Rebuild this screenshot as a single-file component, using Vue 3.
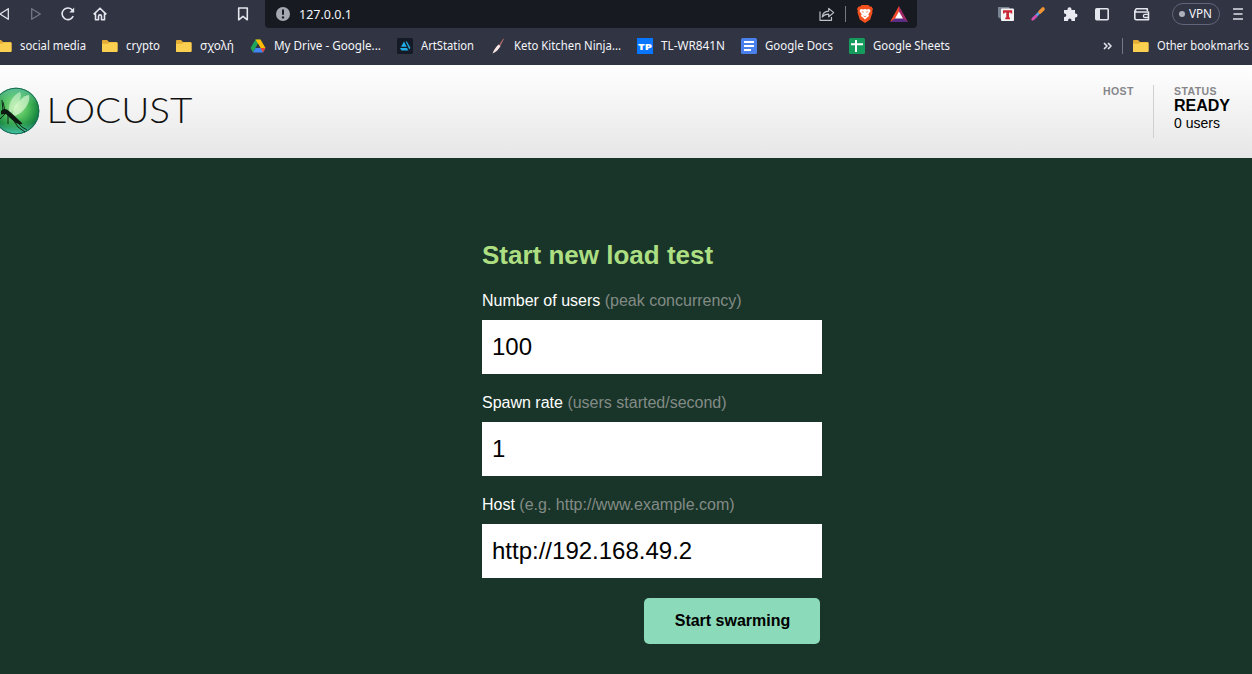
<script setup>
import { ref } from 'vue'

const bookmarks = [
  { icon: 'folder', label: 'social media', w: 66 },
  { icon: 'folder', label: 'crypto', w: 34 },
  { icon: 'folder', label: 'σχολή', w: 34 },
  { icon: 'drive', label: 'My Drive - Google...', w: 107 },
  { icon: 'art', label: 'ArtStation', w: 53 },
  { icon: 'knife', label: 'Keto Kitchen Ninja...', w: 107 },
  { icon: 'tp', label: 'TL-WR841N', w: 64 },
  { icon: 'docs', label: 'Google Docs', w: 68 },
  { icon: 'sheets', label: 'Google Sheets', w: 77 },
]

const fields = ref([
  { label: 'Number of users', hint: '(peak concurrency)', value: '100' },
  { label: 'Spawn rate', hint: '(users started/second)', value: '1' },
  { label: 'Host', hint: '(e.g. http://www.example.com)', value: 'http://192.168.49.2' },
])
</script>

<template>
  <div class="window">
    <div class="chrome">
      <div class="toolbar">
        <div class="nav">
          <svg class="ic" viewBox="0 0 16 16"><path d="M12.3 2.7v10.6L4 8z" class="line" /></svg>
          <svg class="ic dim" viewBox="0 0 16 16"><path d="M3.700 2.700v10.600L12.300 8z" class="line" /></svg>
          <svg class="ic" viewBox="0 0 16 16"><path d="M13.2 10.2A5.8 5.8 0 1 1 12.6 4.4" class="line thick" /><path d="M14.2 1.6v5H9.3z" fill="#e4e6ee" /></svg>
          <svg class="ic" viewBox="0 0 16 16"><path d="M1.7 8.4 8 2.2l6.3 6.2M3.5 7.5v6.2h3V10.400a1.500 1.500 0 0 1 3 0v3.300h3V7.500" class="line thick" /></svg>
        </div>
        <svg class="ic save" viewBox="0 0 16 16"><path d="M3.700 2h8.600v11.800L8 10.300l-4.300 3.500z" class="line thick" /></svg>
        <div class="urlbar">
          <svg class="ic" viewBox="0 0 16 16"><circle cx="8" cy="8" r="7" fill="#a5a7b1" /><path d="M8 3.600v5.200" stroke="#171a21" stroke-width="2" /><circle cx="8" cy="11.400" r="1.200" fill="#171a21" /></svg>
          <svg class="url" width="54" height="18"><text x="0" y="13.500" textLength="53" lengthAdjust="spacingAndGlyphs">127.0.0.1</text></svg>
          <svg class="ic share" viewBox="0 0 16 16"><path d="M1 5.500V14.300h11.500V11" class="soft" /><path d="M3.300 11C3.600 7.200 6 5.300 9.700 5.200V2.400l5 4.200-5 4.200V8.100C7 8 5 8.700 3.300 11z" class="soft" /></svg>
          <i class="bar"></i>
          <svg class="brave" viewBox="0 0 16 18">
            <path d="M4.600 0h6.800l1.300 1.500 1.700-.1L16 4l-.8 1.800.3 1.700-2.300 7L8 18l-5.200-3.500L.5 7.500l.3-1.700L0 4l1.600-2.600 1.700.1z" fill="#f4511f" />
            <path d="m3.700 4 2.500.5L8 4l1.800.5 2.500-.5 1.200 2-2.200 3.200.8 1.800-2 1.400L8 14.500l-2.100-2.100-2-1.400.8-1.800L2.500 6z" fill="#fff" />
            <path d="m4.500 6.300 2.300.5-.7 1zM11.500 6.300l-2.300.5.700 1zM6 10.500l2 .8 2-.8-1.200 1.300H7.200z" fill="#f4511f" />
          </svg>
          <svg class="bat" viewBox="0 0 18 16"><path d="M9 0 0 16l9-5z" fill="#f0492b" /><path d="m9 0 9 16-9-5z" fill="#a02a67" /><path d="M0 16h18l-9-6z" fill="#5b2d86" /><path d="m9 5.500 4 7H5z" fill="#fff" /></svg>
        </div>
        <div class="exts">
          <svg class="ic" viewBox="0 0 16 16"><path d="M0 1h11l2 4v9H4L0 11z" fill="#788491" /><rect x="3" y="2.500" width="13" height="12.500" rx="1" fill="#f4f4f5" /><path d="M5 4.300h9.200v3.200h-1.400l-.4-.9H11v4.900h1V13.200H7.300v-1.700h1V6.600H6.800l-.4.900H5z" fill="#ca2634" /></svg>
          <svg class="ic" viewBox="0 0 16 16"><path d="m3 13 6.300-6.400" stroke="#5a9fea" stroke-width="2.700" /><path d="m2.600 13.400 3.300-3.300" stroke="#d947a8" stroke-width="2.700" stroke-linecap="round" /><path d="m10 6 3-3" stroke="#f19432" stroke-width="3.600" stroke-linecap="round" /></svg>
          <svg class="ic" viewBox="0 0 16 16"><path d="M2 4h3.500v-.8a2 2 0 0 1 4 0V4H13v3.500h.5a2 2 0 0 1 0 4H13V15H9.500v-.8a1.700 1.700 0 0 0-3.400 0V15H2v-4h.6a1.700 1.700 0 0 0 0-3.400H2z" fill="#e9eaf1" /></svg>
          <svg class="ic" viewBox="0 0 16 16"><rect x="1.800" y="2.800" width="12.400" height="10.900" rx="1" class="line thick" /><path d="M2 3h4v10.500H2z" fill="#e4e6ee" /></svg>
        </div>
        <svg class="ic wallet" viewBox="0 0 16 16"><path d="M13.300 5V2.800H2.500a1.700 1.700 0 0 0 0 3.200h12v7.700H2.300a1.500 1.500 0 0 1-1.500-1.500V4.400" class="line thick" /><path d="M15 8.300h-4a1.600 1.600 0 0 0 0 3.200h4" class="line" /></svg>
        <div class="vpn"><i></i><svg width="24" height="16"><text x="0" y="12" textLength="23" lengthAdjust="spacingAndGlyphs">VPN</text></svg></div>
        <svg class="menu" viewBox="0 0 10 12"><path d="M0 1h10M.5 6h9M0 11h10" stroke="#dfe1e9" stroke-width="1.700" /></svg>
      </div>

      <div class="bookmarks">
        <div v-for="b in bookmarks" :key="b.label" class="bm">
          <svg v-if="b.icon === 'folder'" class="ic" viewBox="0 0 16 16"><path d="M0 3q0-1 1-1h4l2 2h7.500q1 0 1 1v8q0 1-1 1H1q-1 0-1-1z" fill="#e6ad35" /><path d="M0 5.800h5.800L7.500 4.400h7q1 0 1 1V13q0 1-1 1H1q-1 0-1-1z" fill="#fbd050" /></svg>
          <svg v-else-if="b.icon === 'drive'" class="ic" viewBox="0 0 16 16"><path d="M5.500 1.500h5L5.600 10 3 14.500.500 10z" fill="#20a35b" /><path d="M5.500 1.500h5l5 8.500h-5z" fill="#fbbc04" /><path d="M3 14.500 5.600 10h9.900L13 14.500z" fill="#4285f4" /><path d="M10.500 10h5L13 14.500z" fill="#e94235" /><path d="M8 5.800 5.600 10h4.800z" fill="#303443" /></svg>
          <svg v-else-if="b.icon === 'art'" class="ic" viewBox="0 0 16 16"><rect width="16" height="16" rx="1.500" fill="#141b26" /><path d="M3 10h7l1.400 2.500H4.400zM7 3.500 9.700 8.700H4zM8.700 3.500h1.200l3.500 6.200-1 1.800z" fill="#20aee6" /></svg>
          <svg v-else-if="b.icon === 'knife'" class="ic" viewBox="0 0 16 16"><path d="m9.300 6.500 4-6 .6.500-3.300 6.400z" fill="#b56e69" /><path d="m8.600 6.400 2 1.500C8.500 11.600 5.800 14 2.500 15.500c1.300-3.500 3.200-6.700 6.100-9.100z" fill="#fbe7e5" /></svg>
          <svg v-else-if="b.icon === 'tp'" class="ic" viewBox="0 0 16 16"><rect width="16" height="16" fill="#0876ff" /><text x="1" y="11.500" textLength="14" lengthAdjust="spacingAndGlyphs" class="tp">TP</text></svg>
          <svg v-else-if="b.icon === 'docs'" class="ic" viewBox="0 0 16 16"><rect width="16" height="16" rx="1.500" fill="#4a80ec" /><path d="M3 4h10M3 8h10M3 12h7" stroke="#fff" stroke-width="1.800" /></svg>
          <svg v-else class="ic" viewBox="0 0 16 16"><rect width="16" height="16" rx="1.500" fill="#159b5b" /><path d="M2 6.200h12M7 2v12" stroke="#fff" stroke-width="2" /></svg>
          <svg class="label" :width="b.w" height="20"><text x="0" y="14" :textLength="b.w" lengthAdjust="spacingAndGlyphs">{{ b.label }}</text></svg>
        </div>
        <svg class="more" viewBox="0 0 9 8"><path d="m1 1 3 3-3 3M5 1l3 3-3 3" class="line thick" /></svg>
        <i class="bar"></i>
        <div class="bm">
          <svg class="ic" viewBox="0 0 16 16"><path d="M0 3q0-1 1-1h4l2 2h7.500q1 0 1 1v8q0 1-1 1H1q-1 0-1-1z" fill="#e6ad35" /><path d="M0 5.800h5.800L7.500 4.400h7q1 0 1 1V13q0 1-1 1H1q-1 0-1-1z" fill="#fbd050" /></svg>
          <svg class="label" width="93" height="20"><text x="0" y="14" textLength="92" lengthAdjust="spacingAndGlyphs">Other bookmarks</text></svg>
        </div>
      </div>
    </div>

    <header class="header">
      <svg class="logo" viewBox="0 0 200 50">
        <defs>
          <radialGradient id="orb" cx=".5" cy=".42" r=".58">
            <stop offset="0" stop-color="#a5e892" />
            <stop offset=".45" stop-color="#4dbd5b" />
            <stop offset=".8" stop-color="#1d8b42" />
            <stop offset="1" stop-color="#0e6b50" />
          </radialGradient>
          <linearGradient id="gloss" x1="0" y1="0" x2="0" y2="1">
            <stop offset="0" stop-color="#68c9b0" stop-opacity=".75" />
            <stop offset=".35" stop-color="#8fe5a8" stop-opacity="0" />
            <stop offset=".75" stop-color="#55d0a0" stop-opacity="0" />
            <stop offset="1" stop-color="#58dbc4" stop-opacity=".8" />
          </linearGradient>
        </defs>
        <circle cx="16" cy="24" r="23.300" fill="url(#orb)" />
        <circle cx="16" cy="24" r="22.800" fill="url(#gloss)" stroke="#196e56" stroke-width="1" />
        <path d="M9 25C8 16 13 8 20 5c3 4-2 14-9 21z" fill="#edffe5" opacity=".5" />
        <path d="M12 27C15 17 23 8 29 8c2 8-5 17-14 21z" fill="#edffe5" opacity=".6" />
        <path d="M1 24q2-3 6-1.500l2.500 2 4 3.500 9 8.500-1.500 1-5-1.500-6-5-4-4-5 .5z" fill="#0c1b12" />
        <path d="M3 24 2 13M5 24 3 15M8 27v10M12 31l6 9 7 5M16 34l6 6 5 3M5 27l-5 5" fill="none" stroke="#0c1b12" stroke-width=".9" />
        <text x="46.500" y="36" textLength="146" lengthAdjust="spacingAndGlyphs" class="word">LOCUST</text>
      </svg>
      <div class="boxes">
        <div class="box host"><div class="cap">HOST</div></div>
        <div class="box status">
          <div class="cap">STATUS</div>
          <div class="state">READY</div>
          <div class="count">0 users</div>
        </div>
      </div>
    </header>

    <main class="main">
      <form class="form" @submit.prevent>
        <h2>Start new load test</h2>
        <div v-for="f in fields" :key="f.label" class="field">
          <label>{{ f.label }} <span>{{ f.hint }}</span></label>
          <input v-model="f.value" type="text" />
        </div>
        <button type="submit">Start swarming</button>
      </form>
    </main>
  </div>
</template>

<style>
body { margin: 0; background: #193529; overflow: hidden; }
</style>

<style scoped>
.window { width: 1252px; height: 674px; overflow: hidden; display: flex; flex-direction: column; font-family: "Liberation Sans", Arial, sans-serif; }
.window svg { display: block; flex: none; overflow: visible; }
.ic { width: 16px; height: 16px; }
.line, .soft { fill: none; stroke: #e4e6ee; stroke-width: 1.3; stroke-linejoin: round; }
.thick { stroke-width: 1.6; }
.soft { stroke: #bfc1c8; stroke-width: 1.2; }
.dim { opacity: .38; }
.chrome { height: 65px; flex: none; background: #303443; font-family: "Noto Sans", "Open Sans", sans-serif; }
.chrome text { font-size: 12px; fill: #f4f5f9; }
.toolbar { height: 28px; display: flex; align-items: center; }
.nav { display: flex; gap: 16px; margin-left: -4px; }
.save { margin-left: 127px; }
.urlbar { width: 652px; height: 28px; margin-left: 14px; box-sizing: border-box; padding-left: 10px; background: #171a21; border-radius: 0 0 4px 4px; display: flex; align-items: center; }
.url { margin-left: 8px; }
.share { margin-left: 466px; }
.bar { width: 1px; height: 16px; background: #767985; flex: none; }
.urlbar .bar { margin-left: 10px; }
.urlbar .brave { width: 16px; height: 18px; margin-left: 11px; }
.urlbar .bat { width: 18px; height: 16px; margin-left: 17px; }
.exts { display: flex; gap: 16px; margin-left: 81px; }
.wallet { margin-left: 24px; }
.vpn { width: 48px; height: 22px; box-sizing: border-box; margin-left: 22px; border: 1px solid #62657a; border-radius: 11px; display: flex; align-items: center; justify-content: center; gap: 4px; }
.vpn i { width: 6px; height: 6px; border-radius: 50%; background: #aeb0ba; }
.menu { width: 10px; height: 12px; margin-left: 13px; }
.bookmarks { height: 36px; display: flex; align-items: center; gap: 16px; margin-left: -4px; }
.bm { display: flex; align-items: center; gap: 8px; flex: none; }
.bookmarks .more { width: 9px; height: 8px; margin-left: 137px; }
.bookmarks .bar { margin-left: -6px; margin-right: -6px; }
.chrome .tp { font-size: 9px; font-weight: 900; fill: #fff; }
.header { height: 93px; flex: none; background: linear-gradient(#fff, #e6e6e6); display: flex; justify-content: space-between; align-items: flex-start; }
.logo { width: 200px; height: 50px; margin-top: 22px; }
.word { font-family: Lato, sans-serif; font-weight: 300; font-size: 35px; fill: #111; }
.boxes { display: flex; margin: 20px 22px 0 0; }
.box { box-sizing: border-box; height: 53px; }
.host { width: 51px; border-right: 1px solid #d0d0d0; }
.status { width: 76px; padding-left: 20px; white-space: nowrap; }
.cap { font-size: 10.5px; line-height: 12px; font-weight: bold; letter-spacing: .4px; color: #86868a; }
.state { font-size: 16px; line-height: 17px; font-weight: bold; color: #000; }
.count { font-size: 14px; line-height: 18px; color: #000; }
.main { flex: 1; background: #193529; display: flex; justify-content: center; }
.form { width: 340px; margin-left: 52px; padding-top: 80px; }
h2 { margin: 0 0 20px; font-size: 26px; line-height: 34px; font-weight: bold; color: #addf82; }
.field { margin-bottom: 20px; }
label { display: block; height: 28px; font-size: 16px; line-height: 18px; color: #fff; }
label span { color: #838b86; }
input { display: block; box-sizing: border-box; width: 340px; height: 54px; padding: 0 10px; border: 0; background: #fff; color: #000; font: 24px "Liberation Sans", Arial, sans-serif; }
button { display: block; width: 176px; height: 46px; margin: 20px 2px 0 auto; padding: 0 0 0 1px; border: 0; border-radius: 5px; background: #8bdab9; color: #000; font: bold 16px "Liberation Sans", Arial, sans-serif; }
</style>
